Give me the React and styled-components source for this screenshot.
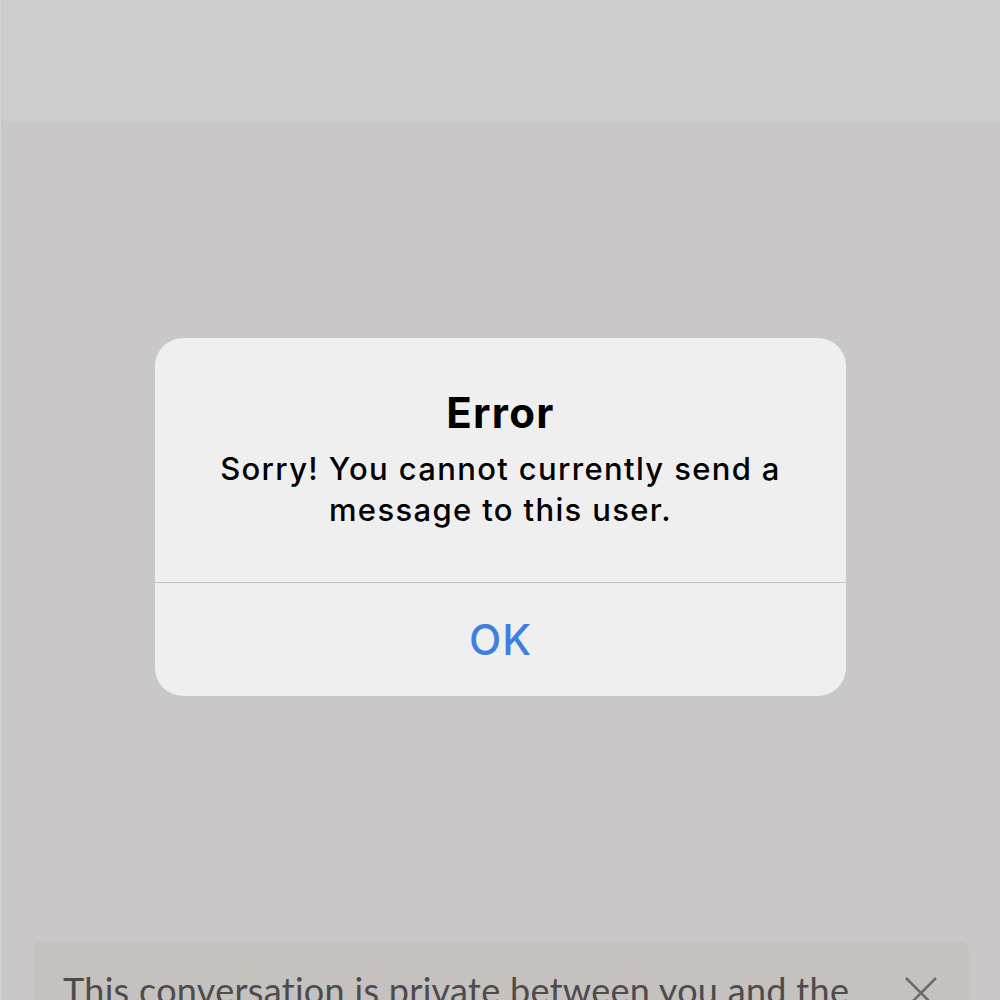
import styled, { createGlobalStyle } from 'styled-components';

const GlobalStyle = createGlobalStyle`
    html, body {
        margin: 0;
        padding: 0;
        background: #c9c7c8;
    }
    * {
        box-sizing: border-box;
    }
`;

const Page = styled.div`
    width: 1000px;
    height: 1000px;
    overflow: hidden;
    display: flex;
    flex-direction: column;
    background: #c9c7c8;
    border-left: 1px solid #d3d3d3;
    font-family: Inter, 'Liberation Sans', sans-serif;
`;
const TopBar = styled.header`
    height: 121px;
    flex-shrink: 0;
    background: #cccccc;
`;
const Main = styled.main`
    flex: 1;
    display: flex;
    flex-direction: column;
    align-items: center;
    padding-top: 217px;
`;
const Alert = styled.div`
    width: 691px;
    background: #f0eff0;
    border-radius: 28px;
    display: flex;
    flex-direction: column;
`;
const AlertBody = styled.div`
    padding: 51px 30px 52px;
    text-align: center;
    border-bottom: 1px solid #c4c3c5;
`;
const AlertTitle = styled.h2`
    margin: 0;
    font-size: 42px;
    line-height: 48px;
    font-weight: 700;
    color: #000;
    letter-spacing: 1.3px;
`;
const AlertMessage = styled.p`
    margin: 11px 0 0;
    font-size: 31px;
    line-height: 41px;
    font-weight: 500;
    color: #000;
    letter-spacing: 1.35px;
`;
const AlertButton = styled.button`
    height: 113px;
    border: none;
    background: none;
    font-family: inherit;
    font-size: 42px;
    font-weight: 500;
    letter-spacing: 1px;
    color: #3e7fe0;
    cursor: pointer;
`;
const Spacer = styled.div`
    flex: 1;
`;
const Banner = styled.div`
    align-self: stretch;
    margin: 0 31px 0 32px;
    height: 58px;
    flex-shrink: 0;
    overflow: hidden;
    background: #c4c1bf;
    border-radius: 8px 8px 0 0;
    display: flex;
    align-items: flex-start;
    justify-content: space-between;
    padding: 28px 32px 0 30px;
`;
const BannerText = styled.span`
    font-family: Lato, 'Liberation Sans', sans-serif;
    font-size: 36px;
    line-height: 40px;
    letter-spacing: 0.3px;
    font-variant-ligatures: none;
    color: #4d4b4b;
    white-space: nowrap;
`;
const CloseIcon = styled.svg`
    width: 32px;
    height: 32px;
    flex-shrink: 0;
    margin-top: 7px;
    stroke: #6c6a6a;
    stroke-width: 2.5;
`;

export default function App() {
    return (
        <>
            <GlobalStyle />
            <Page>
                <TopBar />
                <Main>
                    <Alert>
                        <AlertBody>
                            <AlertTitle>Error</AlertTitle>
                            <AlertMessage>
                                Sorry! You cannot currently send a
                                <br />
                                message to this user.
                            </AlertMessage>
                        </AlertBody>
                        <AlertButton>OK</AlertButton>
                    </Alert>
                    <Spacer />
                    <Banner>
                        <BannerText>This conversation is private between you and the</BannerText>
                        <CloseIcon viewBox="0 0 32 32" fill="none">
                            <path d="M1 1 L31 31 M31 1 L1 31" />
                        </CloseIcon>
                    </Banner>
                </Main>
            </Page>
        </>
    );
}
